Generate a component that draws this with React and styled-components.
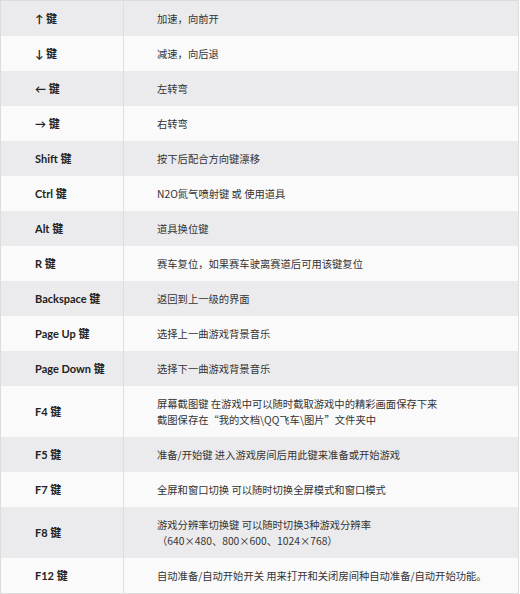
import React from "react";
import styled, { createGlobalStyle } from "styled-components";

const Global = createGlobalStyle`
  html, body { margin: 0; padding: 0; background: #ffffff; }
  body { font-family: Lato, "Noto Sans CJK SC", sans-serif; }
`;

const Table = styled.table`
  width: 519px;
  table-layout: fixed;
  border-collapse: collapse;
  border: 1px solid #dcdcdc;
  font-family: Lato, "Noto Sans CJK SC", sans-serif;
  color: #333333;
`;

const KeyCol = styled.col`
  width: 123px;
`;

const Row = styled.tr`
  background: ${(p) => (p.$alt ? "#fafafa" : "#ebebed")};
`;

const KeyCell = styled.td`
  padding: 10px 0 9px 34px;
  line-height: 16px;
  font-size: 11px;
  font-weight: 700;
  border-right: 1px solid #dedede;
  vertical-align: middle;
  white-space: nowrap;
  color: #222;
`;

const DescCell = styled.td`
  padding: 10px 0 9px 33px;
  line-height: 16px;
  vertical-align: middle;
  font-family: "Noto Sans CJK SC", sans-serif;
  font-size: 10.3px;
  white-space: nowrap;
`;

const Line = styled.div``;

const rows = [
  ["↑ 键", ["加速，向前开"]],
  ["↓ 键", ["减速，向后退"]],
  ["← 键", ["左转弯"]],
  ["→ 键", ["右转弯"]],
  ["Shift 键", ["按下后配合方向键漂移"]],
  ["Ctrl 键", ["N2O氮气喷射键 或 使用道具"]],
  ["Alt 键", ["道具换位键"]],
  ["R 键", ["赛车复位，如果赛车驶离赛道后可用该键复位"]],
  ["Backspace 键", ["返回到上一级的界面"]],
  ["Page Up 键", ["选择上一曲游戏背景音乐"]],
  ["Page Down 键", ["选择下一曲游戏背景音乐"]],
  ["F4 键", ["屏幕截图键 在游戏中可以随时截取游戏中的精彩画面保存下来", "截图保存在“我的文档\\QQ飞车\\图片”文件夹中"]],
  ["F5 键", ["准备/开始键 进入游戏房间后用此键来准备或开始游戏"]],
  ["F7 键", ["全屏和窗口切换 可以随时切换全屏模式和窗口模式"]],
  ["F8 键", ["游戏分辨率切换键 可以随时切换3种游戏分辨率", "（640×480、800×600、1024×768）"]],
  ["F12 键", ["自动准备/自动开始开关 用来打开和关闭房间种自动准备/自动开始功能。"]],
];

export default function App() {
  return (
    <>
      <Global />
      <Table>
        <colgroup>
          <KeyCol />
          <col />
        </colgroup>
        <tbody>
          {rows.map(([k, lines], i) => (
            <Row key={k} $alt={i % 2 === 1}>
              <KeyCell>{k}</KeyCell>
              <DescCell>
                {lines.map((l) => (
                  <Line key={l}>{l}</Line>
                ))}
              </DescCell>
            </Row>
          ))}
        </tbody>
      </Table>
    </>
  );
}
